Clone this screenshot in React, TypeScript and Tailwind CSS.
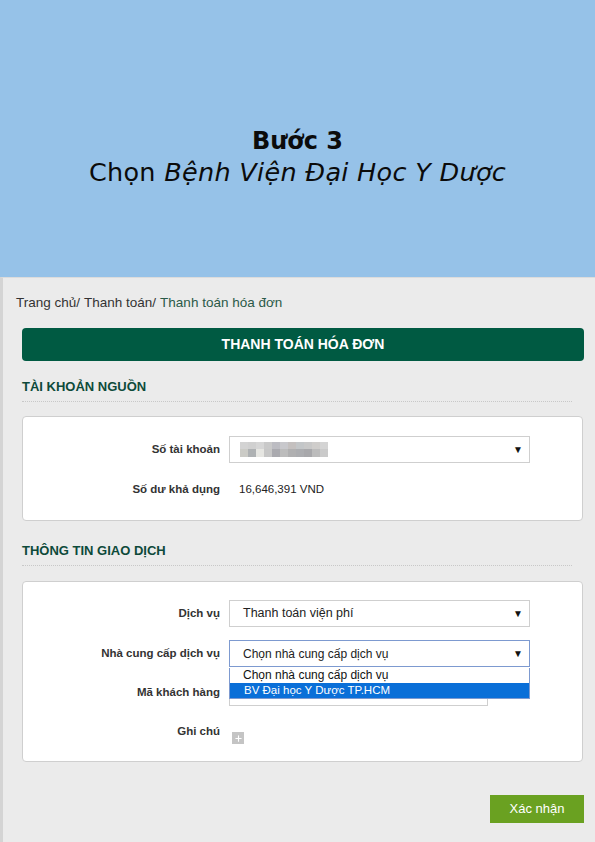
import { Plus } from "lucide-react";

const blurTop = ["#d3d3d3", "#d0d0d0", "#d6d6d6", "#c9c9c9", "#bcbcc2", "#c8c8cc", "#c4c0bf", "#c3c6c8", "#c8c8c8", "#cfcdcb", "#d4d4d4"];
const blurBottom = ["#cbcbc6", "#aeb1b3", "#e6e6e2", "#c7c7c7", "#aaaaaf", "#bcbcbc", "#b0b0b1", "#acadb0", "#a8a8ab", "#bcbcbc", "#cacaca"];

function Caret() {
  return <span className="text-[10px] leading-none text-[#111]">▼</span>;
}

function SelectBox({ children, focused }: { children?: React.ReactNode; focused?: boolean }) {
  return (
    <div
      className={`flex h-[27px] w-[301px] items-center justify-between border bg-white pl-[13px] pr-[6px] text-[12.5px] text-[#222] ${
        focused ? "border-[#7d9ad0]" : "border-[#cfcfcf]"
      }`}
    >
      <div className="flex items-center">{children}</div>
      <Caret />
    </div>
  );
}

function Label({ children }: { children: React.ReactNode }) {
  return <div className="text-right text-[11.5px] font-bold text-[#333]">{children}</div>;
}

export default function App() {
  return (
    <div className="w-[595px] h-[842px] overflow-hidden font-['Liberation_Sans',Arial,sans-serif]">
      <header className="flex h-[277px] flex-col items-center bg-[#96c2e8] pt-[126px] font-['DejaVu_Sans',sans-serif] text-[#0b0b0b]">
        <h1 className="text-[24px] font-bold leading-[31px]">Bước 3</h1>
        <p className="text-[25.5px] leading-[30px] tracking-[0.3px]">
          Chọn <em>Bệnh Viện Đại Học Y Dược</em>
        </p>
      </header>

      <main className="h-[565px] border-l-[3px] border-t border-l-[#d4d4d4] border-t-[#dcdcdc] bg-[#ebebeb] pl-[19px] pr-[11px]">
        <nav className="-ml-[6px] flex gap-[4px] pt-[17px] text-[13.5px] leading-[16px] text-[#333]">
          <span>Trang chủ/</span>
          <span>Thanh toán/</span>
          <span className="text-[#2a5a48]">Thanh toán hóa đơn</span>
        </nav>

        <div className="mt-[17px] flex h-[33px] items-center justify-center rounded-[4px] bg-[#005a42] text-[14px] font-bold text-white">
          THANH TOÁN HÓA ĐƠN
        </div>

        <h2 className="mt-[18px] text-[13px] font-bold leading-[16px] text-[#0d4a3a]">TÀI KHOẢN NGUỒN</h2>
        <div className="mt-[6px] mr-[12px] border-b border-dotted border-[#c8c8c8]" />

        <section className="mt-[14px] mr-[1px] h-[105px] rounded-[4px] border border-[#cfcfcf] bg-white pt-[19px]">
          <div className="grid grid-cols-[197px_1fr] items-center gap-x-[9px]">
            <Label>Số tài khoản</Label>
            <SelectBox>
              <div className="-ml-[3px] grid grid-cols-[repeat(11,8px)]">
                {blurTop.map((c, i) => (
                  <div key={`t${i}`} className="h-[7px]" style={{ background: c }} />
                ))}
                {blurBottom.map((c, i) => (
                  <div key={`b${i}`} className="h-[8px]" style={{ background: c }} />
                ))}
              </div>
            </SelectBox>
            <div className="col-span-2 h-[18px]" />
            <Label>Số dư khả dụng</Label>
            <div className="pl-[10px] text-[11.5px] text-[#222]">16,646,391 VND</div>
          </div>
        </section>

        <h2 className="mt-[22px] text-[13px] font-bold leading-[16px] text-[#0d4a3a]">THÔNG TIN GIAO DỊCH</h2>
        <div className="mt-[6px] mr-[12px] border-b border-dotted border-[#c8c8c8]" />

        <section className="relative mt-[15px] mr-[1px] h-[181px] rounded-[4px] border border-[#cfcfcf] bg-white pt-[18px]">
          <div className="grid grid-cols-[197px_1fr] items-center gap-x-[9px]">
            <Label>Dịch vụ</Label>
            <SelectBox>Thanh toán viện phí</SelectBox>
            <div className="col-span-2 h-[13px]" />
            <Label>Nhà cung cấp dịch vụ</Label>
            <SelectBox focused>
              <span className="text-[12px]">Chọn nhà cung cấp dịch vụ</span>
            </SelectBox>
            <div className="col-span-2 h-[12px]" />
            <Label>Mã khách hàng</Label>
            <div className="h-[27px] w-[259px] border border-[#cfcfcf] bg-white" />
            <div className="col-span-2 h-[17px]" />
            <div className="self-start">
              <Label>Ghi chú</Label>
            </div>
            <div className="pt-[9px] pl-[3px]">
              <div className="flex h-[12px] w-[12px] items-center justify-center bg-[#c4c4c4]">
                <Plus className="h-[9px] w-[9px] text-white" strokeWidth={3} />
              </div>
            </div>
          </div>

          <div className="absolute left-[206px] top-[86px] w-[301px] border border-t-0 border-[#7d9ad0] bg-white text-[12px] leading-[15px]">
            <div className="pl-[13px] text-[#111]">Chọn nhà cung cấp dịch vụ</div>
            <div className="bg-[#0a6fd8] pl-[14px] text-[11.5px] text-white">BV Đại học Y Dược TP.HCM</div>
          </div>
        </section>

        <div className="mt-[33px] flex justify-end">
          <button
            type="button"
            className="h-[28px] w-[94px] bg-[#6aa121] text-[13px] text-white"
          >
            Xác nhận
          </button>
        </div>
      </main>
    </div>
  );
}
